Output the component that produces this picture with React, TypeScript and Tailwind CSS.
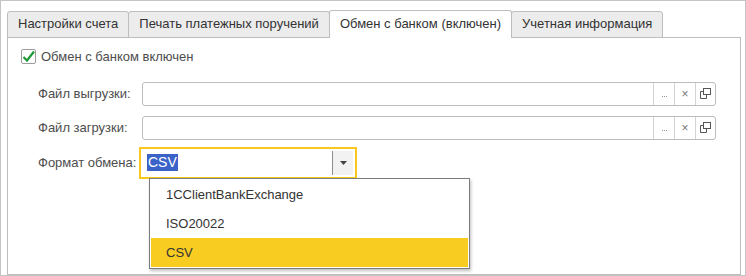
import { useState } from 'react'

const tabs = ['Настройки счета', 'Печать платежных поручений', 'Обмен с банком (включен)', 'Учетная информация']

function FileField({ label }: { label: string }) {
  return (
    <div className="flex items-center h-[24px]">
      <div className="w-[104px] text-[13px] text-[#4d4d4d]">{label}</div>
      <div className="flex h-[24px] w-[574px] rounded-[3px] border border-[#bcbcbc] bg-white">
        <div className="flex-1" />
        <div className="flex w-[21px] items-center justify-center gap-[1px] border-l border-[#d3d3d3] pt-[6px]">
          <span className="h-px w-px bg-[#999]" />
          <span className="h-px w-px bg-[#999]" />
          <span className="h-px w-px bg-[#999]" />
        </div>
        <div className="flex w-[21px] items-center justify-center border-l border-[#d3d3d3] text-[12px] text-[#777]">×</div>
        <div className="flex w-[20px] items-center justify-center border-l border-[#d3d3d3]">
          <svg width="11" height="11" viewBox="0 0 11 11" fill="none" stroke="#555" strokeWidth="1">
            <rect x="3.5" y="0.5" width="7" height="6" />
            <path d="M3.5 3.5H0.5V10.5H6.5V6.5" />
          </svg>
        </div>
      </div>
    </div>
  )
}

export default function App() {
  const [active, setActive] = useState(2)
  const options = ['1CClientBankExchange', 'ISO20022', 'CSV']

  return (
    <div className="relative w-[746px] h-[276px] overflow-hidden border border-[#c4c4c4] bg-white font-['Liberation_Sans',Arial,sans-serif]">
      <div className="flex flex-col h-full pt-[9px] pl-[6px] pr-[4px]">
        {/* Tabs */}
        <div className="flex items-end h-[28px]">
          {tabs.map((t, i) => (
            <button
              key={t}
              onClick={() => setActive(i)}
              className={
                i === active
                  ? 'relative z-10 -ml-px h-[28px] rounded-t-[3px] border border-b-0 border-[#bdbdbd] bg-white px-[10px] pb-[2px] text-[13px] text-[#333]'
                  : 'h-[27px] -ml-px first:ml-0 rounded-t-[3px] border border-[#bdbdbd] bg-[#ececec] px-[10px] pb-[2px] text-[13px] text-[#333]'
              }
            >
              {t}
            </button>
          ))}
        </div>

        {/* Panel */}
        <div className="-mt-px flex-1 border border-[#bdbdbd] pt-[9px] pl-[13px]">
          <label className="flex items-center gap-[5px]">
            <span className="flex h-[15px] w-[15px] items-center justify-center rounded-[2px] border border-[#9d9d9d] bg-white">
              <svg width="13" height="13" viewBox="0 0 13 13">
                <path d="M1.5 7L5 10.5L12 1.5" fill="none" stroke="#1f9a3a" strokeWidth="2.2" />
              </svg>
            </span>
            <span className="text-[13px] text-[#4d4d4d]">Обмен с банком включен</span>
          </label>

          <div className="mt-[15px] ml-[17px] flex flex-col gap-[10px]">
            <FileField label="Файл выгрузки:" />
            <FileField label="Файл загрузки:" />
            <div className="flex items-center h-[32px] mt-[-3px]">
              <div className="w-[101px] text-[13px] text-[#4d4d4d]">Формат обмена:</div>
              <div className="flex h-[32px] w-[218px] items-stretch border-2 border-[#f8c91c] bg-white p-[2px]">
                <div className="flex flex-1 items-center pl-[4px]">
                  <span className="bg-[#3a62c8] px-px text-[14px] leading-[17px] text-white">CSV</span>
                </div>
                <div className="flex w-[21px] items-center justify-center border-l border-[#8e8e8e] bg-[#f2f2f2]">
                  <svg width="7" height="4" viewBox="0 0 7 4">
                    <path d="M0 0H7L3.5 4Z" fill="#444" />
                  </svg>
                </div>
              </div>
            </div>
          </div>
        </div>
      </div>

      {/* Dropdown list */}
      <div className="absolute left-[148px] top-[177px] w-[321px] border border-[#7c7c7c] bg-white p-[1px] shadow-[1px_2px_3px_rgba(0,0,0,0.25)]">
        {options.map((o) => (
          <div
            key={o}
            className={
              o === 'CSV'
                ? 'h-[29px] bg-[#f9cc22] pl-[15px] text-[13px] leading-[29px] text-[#333]'
                : 'h-[29px] pl-[15px] text-[13px] leading-[29px] text-[#333]'
            }
          >
            {o}
          </div>
        ))}
      </div>
    </div>
  )
}
